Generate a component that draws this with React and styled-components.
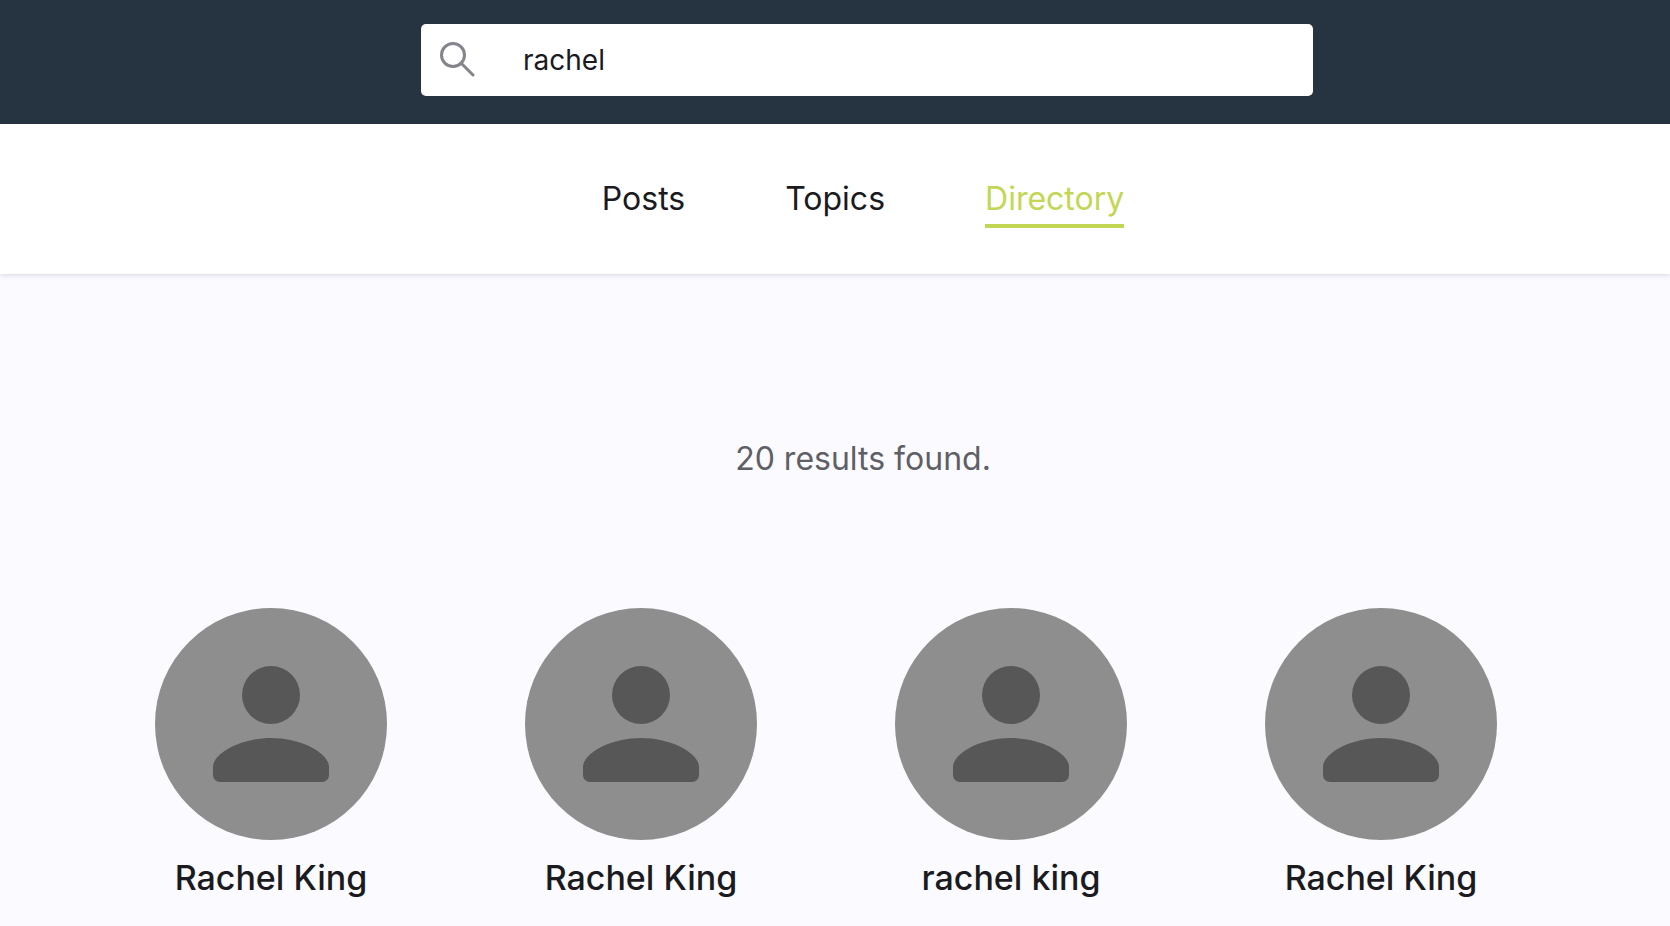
import React from "react";
import styled, { createGlobalStyle } from "styled-components";

const Global = createGlobalStyle`
  html, body { margin: 0; padding: 0; height: 100%; overflow: hidden; background: #fbfaff; }
  body { font-family: Inter, "Liberation Sans", sans-serif; color: #1a1a1f; }
`;
const Page = styled.div`
  width: 1670px;
  height: 926px;
  overflow: hidden;
  background: #fbfaff;
`;
const TopBar = styled.header`
  height: 124px;
  background: #263442;
  box-sizing: border-box;
  padding: 24px 0 0 421px;
`;
const SearchBox = styled.div`
  width: 892px;
  height: 72px;
  background: #fff;
  border-radius: 5px;
  display: flex;
  align-items: center;
  padding-left: 19px;
  box-sizing: border-box;
  gap: 48px;
`;
const SearchIcon = styled.svg`
  width: 35px;
  height: 35px;
  flex: none;
  margin-top: -2px;
`;
const Query = styled.span`
  font-size: 28px;
  line-height: 1;
  margin-top: -1px;
`;
const TabBar = styled.nav`
  height: 150px;
  background: #fff;
  box-shadow: 0 1px 5px rgba(30, 30, 60, 0.17);
  display: flex;
  justify-content: center;
  gap: 100px;
  padding: 55px 0 0 56px;
  box-sizing: border-box;
  position: relative;
`;
const Tab = styled.a`
  font-size: 32px;
  line-height: 40px;
  height: 45px;
  color: ${(p) => (p.$active ? "#c3d655" : "#1a1a1f")};
  border-bottom: 4px solid ${(p) => (p.$active ? "#c3d655" : "transparent")};
`;
const Results = styled.p`
  margin: 165px 0 0 56px;
  text-align: center;
  font-size: 32px;
  line-height: 40px;
  color: #5f5f66;
`;
const Grid = styled.div`
  display: grid;
  grid-template-columns: repeat(4, 370px);
  justify-content: start;
  margin: 129px 0 0 86px;
`;
const Person = styled.div`
  display: flex;
  flex-direction: column;
  align-items: center;
`;
const Avatar = styled.svg`
  width: 232px;
  height: 232px;
`;
const Name = styled.div`
  font-size: 34px;
  font-weight: 500;
  line-height: 40px;
  margin-top: 18px;
  color: #1a1a1f;
  white-space: nowrap;
`;

const people = ["Rachel King", "Rachel King", "rachel king", "Rachel King"];

export default function App() {
  return (
    <Page>
      <Global />
      <TopBar>
        <SearchBox>
          <SearchIcon viewBox="0 0 35 35" fill="none" stroke="#84848c" strokeWidth="3">
            <circle cx="13" cy="13" r="11.5" />
            <path d="M21 21l12 12" strokeLinecap="round" />
          </SearchIcon>
          <Query>rachel</Query>
        </SearchBox>
      </TopBar>
      <TabBar>
        <Tab>Posts</Tab>
        <Tab>Topics</Tab>
        <Tab $active>Directory</Tab>
      </TabBar>
      <Results>20 results found.</Results>
      <Grid>
        {people.map((n, i) => (
          <Person key={i}>
            <Avatar viewBox="0 0 232 232">
              <circle cx="116" cy="116" r="116" fill="#8e8e8e" />
              <circle cx="116" cy="87" r="29" fill="#575757" />
              <path
                d="M58 167v-8C58 145 86 130 116 130s58 15 58 29v8a7 7 0 0 1-7 7H65a7 7 0 0 1-7-7z"
                fill="#575757"
              />
            </Avatar>
            <Name>{n}</Name>
          </Person>
        ))}
      </Grid>
    </Page>
  );
}
